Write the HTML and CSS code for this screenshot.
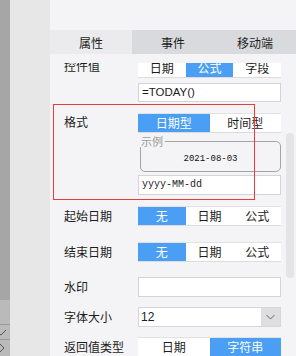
FILE: index.html
```html
<!DOCTYPE html>
<html lang="zh">
<head>
    <meta charset="UTF-8">
    <title>属性面板</title>
    <link rel="stylesheet" href="styles.css">
</head>
<body>
<div class="rail">
    <div class="rail-foot">
        <div class="rail-cell"></div>
        <div class="rail-cell">
            <svg width="10" height="14" viewBox="0 0 10 14"><polyline points="-2,8 1,10 6,5" fill="none" stroke="#555" stroke-width="1"/></svg>
        </div>
        <div class="rail-cell">
            <svg width="10" height="16" viewBox="0 0 10 16"><polyline points="0,4 4,8 0,12" fill="none" stroke="#555" stroke-width="1"/></svg>
        </div>
    </div>
</div>
<div class="side"></div>
<div class="panel">
    <div class="panel-head"></div>
    <div class="tabs">
        <div class="tab active">属性</div>
        <div class="tab">事件</div>
        <div class="tab">移动端</div>
    </div>
    <div class="body">
        <div class="form">
            <!-- 控件值 -->
            <div class="row top r-value">
                <label>控件值</label>
                <div class="ctrl">
                    <div class="seg"><span>日期</span><span class="on">公式</span><span>字段</span></div>
                    <div class="input">=TODAY()</div>
                </div>
            </div>
            <!-- 格式 -->
            <div class="row top r-format">
                <label>格式</label>
                <div class="ctrl">
                    <div class="seg"><span class="on">日期型</span><span>时间型</span></div>
                    <fieldset class="sample">
                        <legend>示例</legend>
                        <div class="sample-date">2021-08-03</div>
                    </fieldset>
                    <div class="input mono">yyyy-MM-dd</div>
                </div>
            </div>
            <div class="row r-start">
                <label>起始日期</label>
                <div class="ctrl">
                    <div class="seg"><span class="on">无</span><span>日期</span><span>公式</span></div>
                </div>
            </div>
            <div class="row r-end">
                <label>结束日期</label>
                <div class="ctrl">
                    <div class="seg"><span class="on">无</span><span>日期</span><span>公式</span></div>
                </div>
            </div>
            <div class="row r-mark">
                <label>水印</label>
                <div class="ctrl">
                    <div class="input"></div>
                </div>
            </div>
            <div class="row r-size">
                <label>字体大小</label>
                <div class="ctrl">
                    <div class="select">
                        <div class="val">12</div>
                        <div class="arrow">
                            <svg width="9" height="6" viewBox="0 0 9 6"><polyline points="0.5,1 4.5,5 8.5,1" fill="none" stroke="#666" stroke-width="1"/></svg>
                        </div>
                    </div>
                </div>
            </div>
            <div class="row r-return">
                <label>返回值类型</label>
                <div class="ctrl">
                    <div class="seg"><span>日期</span><span class="on">字符串</span></div>
                </div>
            </div>
        </div>
    </div>
    <div class="mark"></div>
    <div class="scroll"></div>
</div>
</body>
</html>
```
FILE: styles.css
```css
* {
    box-sizing: border-box;
}

body {
    margin: 0;
    width: 296px;
    height: 356px;
    overflow: hidden;
    display: flex;
    font-family: "Noto Sans CJK SC", sans-serif;
    font-size: 12px;
    color: #1c1c1c;
    background-color: #f4f4f6;
}

/* 最左边的灰条 */
.rail {
    width: 10px;
    background-color: #a6a6a6;
    display: flex;
    flex-direction: column;
    justify-content: flex-end;
}

.rail-foot {
    background-color: #bababa;
}

.rail-cell {
    display: flex;
    border-top: 1px solid #9c9c9c;
}

.rail-cell:first-child {
    height: 24px;
    border-top: none;
}

.side {
    width: 40px;
    background-color: #e7e7e7;
}

/* 右侧属性面板 */
.panel {
    flex: 1;
    position: relative;
    display: flex;
    flex-direction: column;
    background-color: #f4f4f6;
}

.panel-head {
    height: 30px;
}

.tabs {
    height: 24px;
    display: flex;
    background-color: #d9dadd;
}

.tab {
    flex: 1;
    display: flex;
    align-items: center;
    justify-content: center;
}

.tab.active {
    background-color: #ebebed;
}

.body {
    flex: 1;
    overflow: hidden;
    margin-top: 9px;
    padding-left: 14px;
}

.form {
    margin-top: -5px;
}

.row {
    display: flex;
    align-items: center;
}

.row.top {
    align-items: flex-start;
}

.row label {
    width: 74px;
    line-height: 16px;
}

.r-value label {
    margin-top: 0;
}

.r-format {
    margin-top: 11px;
}

.r-format label {
    margin-top: 1px;
}

.r-start {
    margin-top: 11px;
}

.r-end {
    margin-top: 16px;
}

.r-mark {
    margin-top: 15px;
}

.r-size,
.r-return {
    margin-top: 10px;
}

.ctrl {
    width: 143px;
    display: flex;
    flex-direction: column;
}

/* 分段按钮 */
.seg {
    display: flex;
    height: 20px;
    background-color: #fff;
    border-top: 1px solid #e2e2e4;
    border-bottom: 1px solid #dcdcde;
}

.seg span {
    flex: 1;
    text-align: center;
    line-height: 18px;
}

.seg .on {
    background-color: #4a9ef4;
    color: #fff;
}

.input {
    height: 19px;
    margin-top: 5px;
    padding-left: 3px;
    background-color: #fff;
    border: 1px solid #d4d4d6;
    font-family: "Liberation Sans", "Noto Sans CJK SC", sans-serif;
    font-size: 11.5px;
    line-height: 17px;
}

.r-mark .input,
.r-format .input {
    height: 20px;
    margin-top: 0;
}

.r-format .input {
    margin-top: 3px;
}

.input.mono {
    font-family: "Liberation Mono", monospace;
    font-size: 10px;
    line-height: 18px;
    color: #222;
}

/* 示例框 */
.sample {
    margin: 2px 0 0 2px;
    padding: 0;
    height: 37px;
    border: 1px solid #a4a4a4;
    border-radius: 5px;
}

.sample legend {
    padding: 0 2px 0 1px;
    margin-left: -1px;
    font-size: 11px;
    line-height: 12px;
    color: #9a9a9a;
}

.sample-date {
    text-align: center;
    font-family: "Liberation Mono", monospace;
    font-size: 9px;
    line-height: 12px;
    margin-top: 6px;
    color: #111;
}

.select {
    display: flex;
    height: 20px;
    background-color: #fff;
    border: 1px solid #d6d6d8;
}

.select .val {
    flex: 1;
    padding-left: 2px;
    font-family: "Liberation Sans", sans-serif;
    line-height: 18px;
}

.select .arrow {
    width: 19px;
    background-color: #dedee0;
    display: flex;
    align-items: center;
    justify-content: center;
}

/* 红色标注框 */
.mark {
    position: absolute;
    left: 3px;
    top: 104px;
    width: 202px;
    height: 96px;
    border: 1px solid #f03a3a;
}

.scroll {
    position: absolute;
    left: 236px;
    top: 133px;
    width: 8px;
    height: 145px;
    border-radius: 4px;
    background-color: #e4e4e6;
}
```
